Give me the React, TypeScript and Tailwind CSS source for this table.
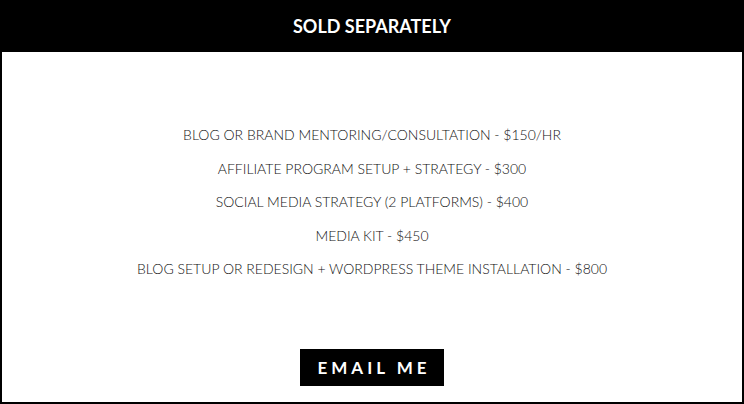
export default function App() {
  const items = [
    "BLOG OR BRAND MENTORING/CONSULTATION - $150/HR",
    "AFFILIATE PROGRAM SETUP + STRATEGY - $300",
    "SOCIAL MEDIA STRATEGY (2 PLATFORMS) - $400",
    "MEDIA KIT - $450",
    "BLOG SETUP OR REDESIGN + WORDPRESS THEME INSTALLATION - $800",
  ];
  return (
    <div className="w-[744px] h-[404px] bg-white font-['Lato',sans-serif] flex flex-col">
      {/* header */}
      <div className="h-[52px] bg-black flex items-center justify-center">
        <h2 className="text-white font-bold text-[18px]">SOLD SEPARATELY</h2>
      </div>

      {/* body */}
      <div className="flex-1 border-x-2 border-b-2 border-black flex flex-col items-center pt-[66px]">
        <ul className="text-[#111] font-light text-[14px] leading-[33.6px] text-center">
          {items.map((t) => (
            <li key={t}>{t}</li>
          ))}
        </ul>
        <div className="mt-[63px] w-[144px] h-[37px] bg-black text-white font-bold text-[17px] tracking-[4px] flex items-center justify-center pl-[4px]">
          EMAIL ME
        </div>
      </div>
    </div>
  );
}
